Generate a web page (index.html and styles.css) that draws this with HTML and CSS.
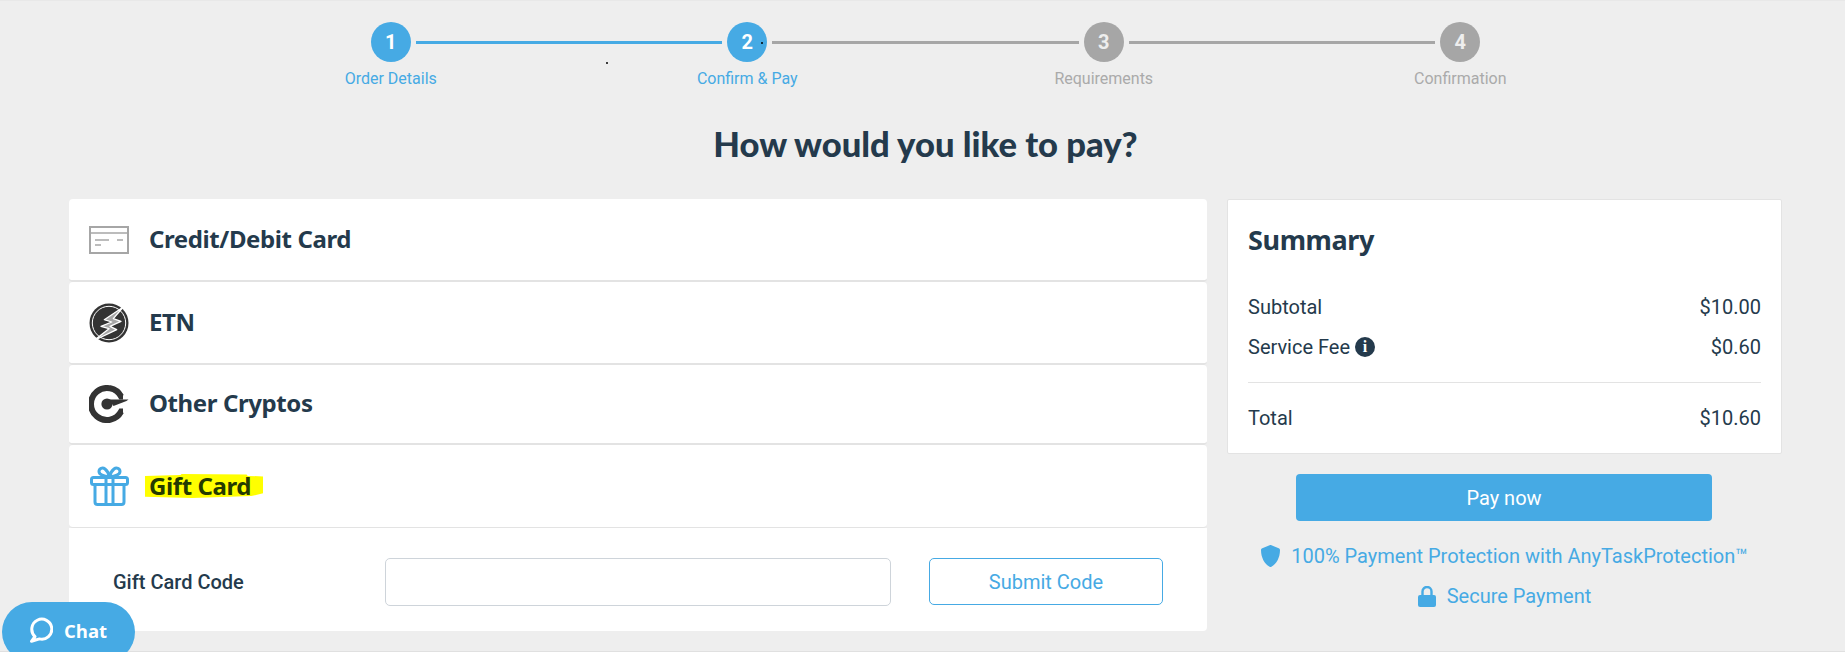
FILE: index.html
```html
<!DOCTYPE html>
<html lang="en">
<head>
<meta charset="utf-8">
<title>How would you like to pay?</title>
<link rel="stylesheet" href="styles.css">
</head>
<body>
<div class="page">
  <ol class="steps">
    <li class="step step-active">
      <div class="step-head"><span class="seg seg-none"></span><span class="step-num">1</span><span class="seg seg-on"></span></div>
      <span class="step-label">Order Details</span>
    </li>
    <li class="step step-active">
      <div class="step-head"><span class="seg seg-on"></span><span class="step-num">2</span><span class="seg seg-off"></span></div>
      <span class="step-label">Confirm &amp; Pay</span>
    </li>
    <li class="step">
      <div class="step-head"><span class="seg seg-off"></span><span class="step-num">3</span><span class="seg seg-off"></span></div>
      <span class="step-label">Requirements</span>
    </li>
    <li class="step">
      <div class="step-head"><span class="seg seg-off"></span><span class="step-num">4</span><span class="seg seg-none"></span></div>
      <span class="step-label">Confirmation</span>
    </li>
  </ol>
  <i class="speck speck-a"></i><i class="speck speck-b"></i>

  <h1 class="title">How would you like to pay?</h1>

  <div class="columns">
    <section class="methods">
      <div class="method method-card">
        <svg class="method-icon" viewBox="0 0 40 28" width="40" height="28" aria-hidden="true">
          <rect x="1" y="1" width="38" height="26" fill="none" stroke="#a6a6a6" stroke-width="2"/>
          <path d="M1 7h38M6 14h14M28 14h6M6 19h6" fill="none" stroke="#a6a6a6" stroke-width="1.5"/>
        </svg>
        <span class="method-name">Credit/Debit Card</span>
      </div>
      <div class="method method-etn">
        <svg class="method-icon" viewBox="0 0 40 40" width="40" height="40" aria-hidden="true">
          <circle cx="20" cy="20" r="19.5" fill="#333"/>
          <circle cx="20" cy="20" r="16.7" fill="none" stroke="#fff" stroke-width="1"/>
          <path d="M34.3 4 15.3 16.7l7.4 2.3L12 23.3l8 2.4L5 37.500l22.700-10.800-6.700-3.400 11-5-7.700-2.600z" fill="#a6a6a6" stroke="#fff" stroke-width="1.3" stroke-linejoin="round"/>
        </svg>
        <span class="method-name">ETN</span>
      </div>
      <div class="method method-crypto">
        <svg class="method-icon" viewBox="0 0 40 38" width="40" height="38" aria-hidden="true">
          <path d="M34 11.500 32.100 11.500A16 16 0 1 0 32.100 26.500L34 26.500" fill="none" stroke="#333" stroke-width="6"/>
          <circle cx="18" cy="19" r="5.600" fill="#333"/>
          <path d="M20 14.500h19.500l-2 1.500-13 5z" fill="#333"/>
        </svg>
        <span class="method-name">Other Cryptos</span>
      </div>
      <div class="method method-gift">
        <svg class="method-icon" viewBox="0 0 39 40" width="39" height="40" aria-hidden="true">
          <g fill="none" stroke="#46aae4" stroke-width="3" stroke-linejoin="round" stroke-linecap="round">
            <rect x="1.500" y="11.500" width="36" height="7" rx="2"/>
            <path d="M5 18.500V36a2.500 2.500 0 0 0 2.500 2.500h24A2.500 2.500 0 0 0 34 36V18.500"/>
            <path d="M16 11.500v27M23 11.500v27"/>
            <path d="M19.500 11C14 10 9 9 9 5.500 9 2.500 12.500 1 15 3c2.500 2 4 5 4.500 8z"/>
            <path d="M19.500 11C25 10 30 9 30 5.500 30 2.500 26.500 1 24 3c-2.500 2-4 5-4.500 8z"/>
          </g>
        </svg>
        <span class="method-name method-marked">Gift Card</span>
      </div>
      <form class="gift-form">
        <label class="gift-label" for="gift-code">Gift Card Code</label>
        <input class="gift-input" id="gift-code" type="text">
        <button class="gift-submit" type="button">Submit Code</button>
      </form>
    </section>

    <aside class="side">
      <section class="summary">
        <h2 class="summary-title">Summary</h2>
        <div class="summary-row summary-row-first"><span>Subtotal</span><span>$10.00</span></div>
        <div class="summary-row summary-row-fee"><span class="fee-name">Service Fee <b class="info-dot">i</b></span><span>$0.60</span></div>
        <div class="summary-row summary-row-total"><span>Total</span><span>$10.60</span></div>
      </section>
      <button class="pay-now" type="button">Pay now</button>
      <p class="assure assure-first">
        <svg viewBox="0 0 19 22" width="19" height="22" aria-hidden="true"><path d="M9.500 0c.3 0 .6.100.9.200l7.300 3c.8.300 1.300 1 1.300 1.800C19 12.500 15.500 19 10.400 21.700c-.6.300-1.200.3-1.800 0C3.500 19 0 12.500 0 5c0-.8.500-1.500 1.300-1.800l7.300-3c.3-.100.6-.200.900-.200z" fill="#46aae4"/></svg>
        <span>100% Payment Protection with AnyTaskProtection™</span>
      </p>
      <p class="assure">
        <svg viewBox="0 0 18 21" width="18" height="21" aria-hidden="true"><path d="M2 9h14a2 2 0 0 1 2 2v8a2 2 0 0 1-2 2H2a2 2 0 0 1-2-2v-8a2 2 0 0 1 2-2z" fill="#46aae4"/><path d="M4.500 10V5.500a4.500 4.500 0 0 1 9 0V10" fill="none" stroke="#46aae4" stroke-width="2.400"/></svg>
        <span>Secure Payment</span>
      </p>
    </aside>
  </div>
</div>
<div class="page-rule"></div>
<button class="chat" type="button">
  <svg viewBox="0 0 24 26" width="24" height="26" aria-hidden="true"><path d="M6 19.500A10 10 0 1 1 10.500 21.900L2.500 24.300z" fill="none" stroke="#fff" stroke-width="3" stroke-linejoin="round"/></svg>
  <span>Chat</span>
</button>
</body>
</html>
```

FILE: styles.css
```css
* { box-sizing: border-box; }
html, body { margin: 0; padding: 0; height: 652px; overflow: hidden; background: #eee; }
body { font-family: Roboto, sans-serif; color: #243a4c; border-top: 1px solid #e8e8e8; position: relative; }

.page { width: 1713px; margin-left: 69px; height: 650px; }

.steps { list-style: none; margin: 0 auto; padding: 21px 0 0; width: 1426px; display: flex; }
.step { flex: 1 1 0; display: flex; flex-direction: column; align-items: center; color: #aaa; }
.step-active { color: #46aae4; }
.step-head { width: 100%; display: flex; align-items: center; gap: 5px; }
.step-num { width: 40px; height: 40px; border-radius: 50%; background: #a6a6a6; color: #eee; display: flex; align-items: center; justify-content: center; font-size: 20px; font-weight: 700; }
.step-active .step-num { background: #46aae4; color: #fff; }
.seg { flex: 1 1 0; height: 3px; }
.seg:last-child { margin-right: -5px; }
.seg:first-child { margin-left: -5px; }
.seg-on { background: #46aae4; }
.seg-off { background: #a6a6a6; }
.step-label { margin-top: 7px; font-size: 16px; line-height: 20px; }

.speck { position: absolute; width: 2px; height: 2px; border-radius: 50%; background: #000; }
.speck-a { left: 606px; top: 61px; }
.speck-b { left: 761px; top: 41px; }

.title { margin: 32px 0 0; text-align: center; font-family: Lato, sans-serif; font-size: 34.6px; line-height: 46px; font-weight: 900; }

.columns { display: flex; align-items: flex-start; gap: 20px; margin-top: 32px; }

.methods { width: 1138px; }
.method { display: flex; align-items: center; gap: 20px; padding: 0 0 0 20px; background: #fff; border-radius: 4px; border-bottom: 2px solid #e3e3e3; }
.method-card { height: 83px; }
.method-etn { height: 83px; }
.method-crypto { height: 80px; }
.method-gift { height: 83px; border-bottom-width: 1px; gap: 20px; padding-left: 21px; }
.method-name { font-family: "Noto Sans", sans-serif; font-size: 24px; font-weight: 700; line-height: 32px; letter-spacing: -0.4px; margin-top: -2px; }
.method-marked { margin-left: -4px; padding: 0 12px 0 4px; height: 24px; line-height: 24px; margin-top: 0; background: #ff0; color: #243a00; clip-path: polygon(0 8%, 30% 4%, 31% 0, 86% 2%, 87% 8%, 100% 10%, 100% 80%, 90% 92%, 40% 100%, 0 95%); }

.gift-form { background: #fff; height: 103px; border-radius: 0 0 4px 4px; display: flex; align-items: flex-start; padding: 30px 0 0 44px; }
.gift-label { width: 272px; font-size: 20px; font-weight: 500; line-height: 48px; }
.gift-input { width: 506px; height: 48px; border: 1px solid #ced4da; border-radius: 5px; background: #fff; }
.gift-submit { margin-left: 38px; width: 234px; height: 47px; border: 1px solid #46aae4; border-radius: 5px; background: #fff; color: #46aae4; font-family: Roboto, sans-serif; font-size: 20px; }

.side { width: 555px; }
.summary { height: 255px; background: #fff; border: 1px solid #e3e3e3; border-radius: 2px; padding: 21px 20px 0; }
.summary-title { margin: 0; font-family: "Noto Sans", sans-serif; font-size: 27px; font-weight: 700; line-height: 38px; letter-spacing: -0.4px; }
.summary-row { display: flex; justify-content: space-between; font-size: 20px; line-height: 24px; }
.summary-row-first { margin-top: 36px; }
.summary-row-fee { margin-top: 16px; padding-bottom: 23px; border-bottom: 1px solid #e3e3e3; }
.summary-row-total { margin-top: 23px; }
.fee-name { display: flex; align-items: center; gap: 5px; }
.info-dot { width: 20px; height: 20px; border-radius: 50%; background: #243a4c; color: #fff; display: inline-flex; align-items: center; justify-content: center; font-family: "Liberation Serif", serif; font-size: 16px; font-weight: 700; }

.pay-now { display: block; margin: 20px 0 0 69px; width: 416px; height: 47px; border: 0; border-radius: 4px; background: #46aae4; color: #fff; font-family: Roboto, sans-serif; font-size: 20px; }

.assure { margin: 0; display: flex; align-items: center; justify-content: center; gap: 11px; height: 40px; color: #46aae4; font-size: 20px; }
.assure-first { margin-top: 15px; }

.page-rule { height: 1px; background: #e0e0e0; }

.chat { position: fixed; left: 2px; top: 602px; width: 133px; height: 60px; border: 0; border-radius: 30px; background: #46aae4; color: #fff; display: flex; align-items: flex-start; gap: 11px; padding: 15px 0 0 27px; font-family: "Open Sans", sans-serif; font-size: 18.5px; font-weight: 700; }
.chat span { line-height: 24px; margin-top: 2px; }
```
